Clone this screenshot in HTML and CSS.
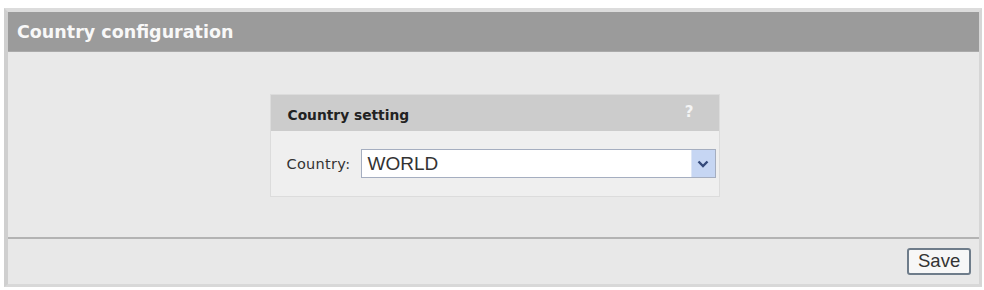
FILE: index.html
```html
<!DOCTYPE html>
<html>
<head>
<meta charset="utf-8">
<link rel="stylesheet" href="styles.css">
</head>
<body>
<div class="page">
  <div class="panel">
    <div class="panel-head">Country configuration</div>
    <div class="panel-body">
      <div class="box">
        <div class="box-head">
          <span class="box-title">Country setting</span>
          <span class="help">?</span>
        </div>
        <div class="box-body">
          <span class="label">Country:</span>
          <div class="select">
            <span class="select-value">WORLD</span>
            <span class="select-btn">
              <svg width="12" height="8" viewBox="0 0 12 8"><path d="M1.5 1.5 L6 6 L10.5 1.5" fill="none" stroke="#34497a" stroke-width="2.4"/></svg>
            </span>
          </div>
        </div>
      </div>
    </div>
    <div class="panel-foot">
      <button class="save">Save</button>
    </div>
  </div>
</div>
</body>
</html>
```
FILE: styles.css
```css
html, body {
  margin: 0;
  padding: 0;
  background: #ffffff;
}
.page {
  width: 984px;
  height: 290px;
  padding: 8px 2px 0 4px;
  box-sizing: border-box;
  background: #fff;
}
.panel {
  border-top: 4px solid #dcdcdc;
  border-left: 4px solid #cfcfcf;
  border-right: 3px solid #d6d6d6;
  border-bottom: 3px solid #d8d8d8;
  background: #e9e9e9;
  font-family: "DejaVu Sans", Verdana, sans-serif;
}
.panel-head {
  background: #9b9b9b;
  height: 39px;
  line-height: 41px;
  padding-left: 9px;
  color: #f8f8f8;
  font-weight: bold;
  font-size: 17.5px;
  border-bottom: 1px solid #aaa;
}
.panel-body {
  height: 187px;
  padding-top: 42px;
  box-sizing: border-box;
  display: flex;
  justify-content: center;
  padding-left: 2px;
  border-bottom: 2px solid #b3b3b3;
}
.box {
  width: 450px;
  height: 103px;
  border: 1px solid #dcdcdc;
  box-sizing: border-box;
  background: #efefef;
}
.box-head {
  height: 36px;
  background: #cccccc;
  display: flex;
  align-items: center;
  justify-content: space-between;
  padding: 0 25px 0 17px;
}
.box-title {
  font-size: 13.8px;
  font-weight: bold;
  color: #222;
  padding-top: 3px;
}
.help {
  color: #f4f4f4;
  font-weight: bold;
  font-size: 15px;
  padding-bottom: 3px;
}
.box-body {
  display: flex;
  align-items: center;
  padding: 18px 3px 0 16px;
}
.label {
  font-size: 14.5px;
  letter-spacing: 0.3px;
  color: #333;
  width: 74px;
}
.select {
  flex: 1;
  height: 29px;
  box-sizing: border-box;
  border: 1px solid #a5aec0;
  background: #fff;
  display: flex;
  align-items: center;
  justify-content: space-between;
}
.select-value {
  font-family: "Liberation Sans", Arial, sans-serif;
  font-size: 19px;
  color: #333;
  padding-left: 6px;
}
.select-btn {
  width: 23px;
  height: 27px;
  background: #c6d6f3;
  border-left: 1px solid #dde6f6;
  display: flex;
  align-items: center;
  justify-content: center;
}
.panel-foot {
  height: 45px;
  display: flex;
  align-items: center;
  justify-content: flex-end;
  padding-right: 8px;
  background: #e8e8e8;
}
.save {
  font-family: "Liberation Sans", Arial, sans-serif;
  font-size: 18.5px;
  line-height: 20px;
  color: #333;
  background: #f7f7f7;
  border: 2px solid #6e7c8a;
  border-radius: 3px;
  padding: 1px 9px 2px;
  height: 27px;
  width: 64px;
}
```
